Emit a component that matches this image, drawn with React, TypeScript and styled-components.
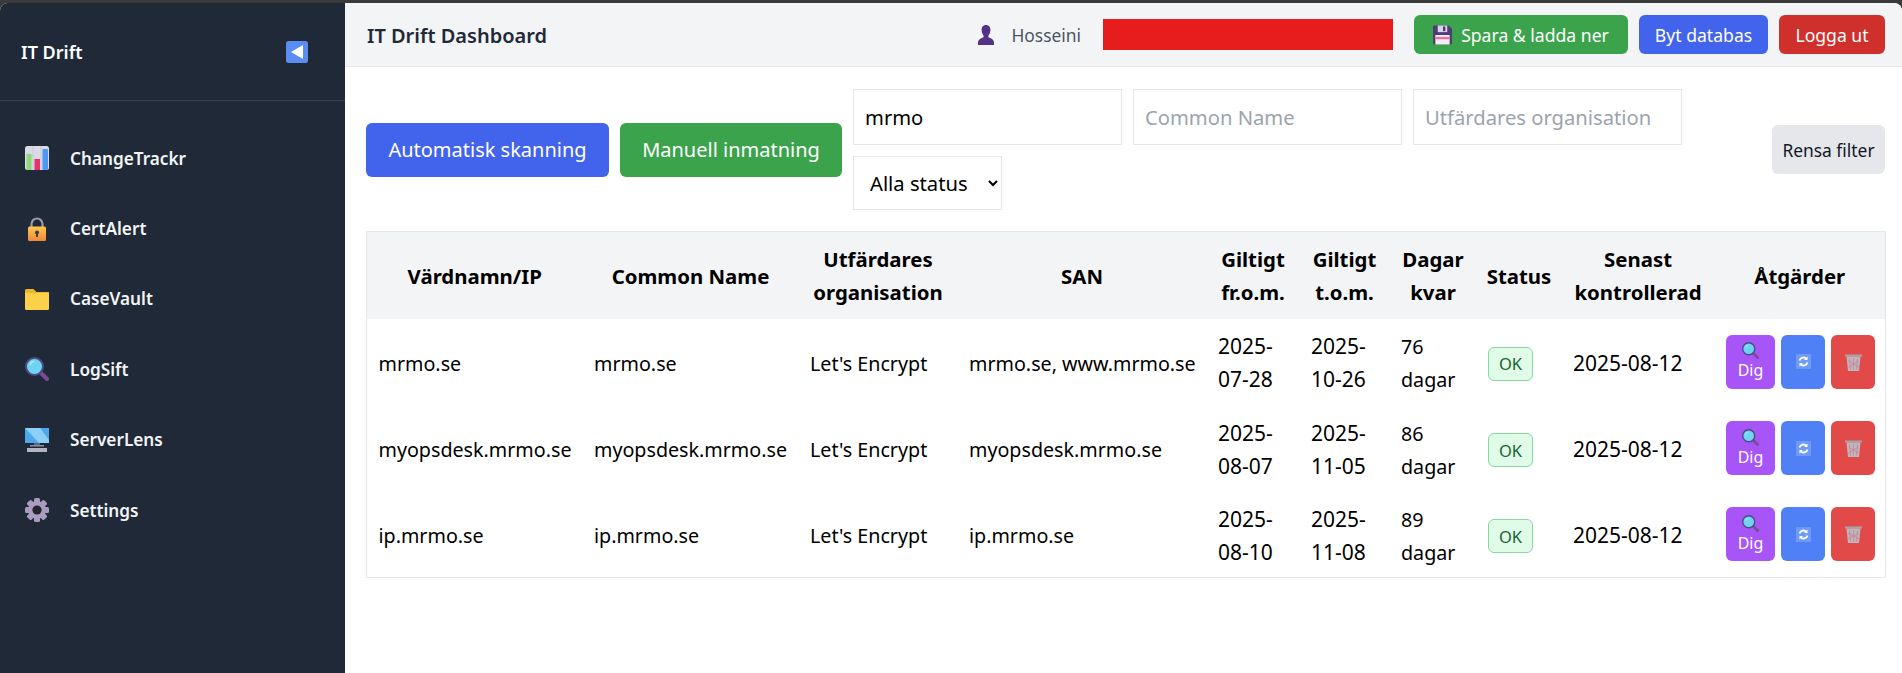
import React from "react";
import styled, { createGlobalStyle } from "styled-components";

const Global = createGlobalStyle`
  html, body { margin: 0; padding: 0; height: 100%; background: #3a3a3a; }
  #root { height: 100%; }
  * { box-sizing: border-box; }
  body { font-family: "Noto Sans", "Open Sans", sans-serif; color: #000; overflow: hidden; }
`;

const Page = styled.div`
  height: 673px;
  padding-top: 3px;
  background: #3a3a3a;
`;
const Shell = styled.div`
  display: flex;
  height: 670px;
  border-radius: 8px 8px 0 0;
  overflow: hidden;
  background: #fff;
`;
const Sidebar = styled.aside`
  width: 345px;
  flex: none;
  background: #1f2937;
  color: #fff;
`;
const Brand = styled.div`
  height: 98px;
  display: flex;
  align-items: center;
  justify-content: space-between;
  padding: 0 37px 0 21px;
  border-bottom: 1px solid #374151;
`;
const BrandName = styled.span`
  font-size: 18px;
  font-weight: 600;
`;
const Nav = styled.nav`
  display: flex;
  flex-direction: column;
  padding-top: 22px;
`;
const NavItem = styled.a`
  height: 70.4px;
  display: flex;
  align-items: center;
  gap: 21px;
  padding-left: 25px;
  font-size: 17.2px;
  font-weight: 600;
  color: #f3f4f6;
`;
const Main = styled.main`
  flex: 1;
  min-width: 0;
  display: flex;
  flex-direction: column;
`;
const Header = styled.header`
  height: 64px;
  display: flex;
  align-items: center;
  padding: 0 17px 0 22px;
  background: #f3f4f6;
  border-bottom: 1px solid #e5e7eb;
`;
const Title = styled.h1`
  margin: 0 auto 0 0;
  padding-top: 2px;
  font-size: 20px;
  font-weight: 600;
  color: #1f2937;
`;
const UserName = styled.span`
  margin-left: 15px;
  font-size: 17.4px;
  color: #4b5563;
`;
const Redaction = styled.div`
  width: 290px;
  height: 31px;
  margin: 0 21px 0 22px;
  background: #e71d1d;
`;
const TopButtons = styled.div`
  display: flex;
  gap: 11px;
`;
const TopButton = styled.button<{ $bg: string; $w: number }>`
  width: ${(p) => p.$w}px;
  height: 39px;
  padding: 0;
  display: flex;
  align-items: center;
  justify-content: center;
  gap: 9px;
  border: 0;
  border-radius: 6px;
  background: ${(p) => p.$bg};
  color: #fff;
  font: 400 17.6px "Noto Sans", sans-serif;
  white-space: nowrap;
`;
const Content = styled.div`
  padding: 22px 17px 0 21px;
`;
const Toolbar = styled.div`
  display: flex;
  align-items: center;
  margin-bottom: 21px;
`;
const BigButton = styled.button<{ $bg: string; $w: number }>`
  width: ${(p) => p.$w}px;
  height: 54px;
  padding: 0;
  margin-right: 11px;
  flex: none;
  border: 0;
  border-radius: 6px;
  background: ${(p) => p.$bg};
  color: #fff;
  font: 400 20px "Noto Sans", sans-serif;
  white-space: nowrap;
`;
const Filters = styled.div`
  width: 840px;
  display: flex;
  flex-wrap: wrap;
  gap: 11px;
`;
const FilterInput = styled.input`
  width: 269px;
  height: 56px;
  padding: 0 11px;
  border: 1px solid #e5e7eb;
  background: #fff;
  color: #000;
  font: 400 20.2px "Noto Sans", sans-serif;
  &::placeholder { color: #9ca3af; opacity: 1; }
`;
const FilterSelect = styled.select`
  width: 149px;
  height: 54px;
  padding: 0 12px;
  border: 1px solid #e5e7eb;
  background: #fff;
  color: #000;
  font: 400 20.2px "Noto Sans", sans-serif;
`;
const ClearButton = styled.button`
  width: 113px;
  height: 49px;
  margin-left: auto;
  padding: 0;
  flex: none;
  border: 0;
  border-radius: 6px;
  background: #e5e7eb;
  color: #111827;
  font: 400 17.4px "Noto Sans", sans-serif;
  white-space: nowrap;
`;
const Table = styled.table`
  width: 1519px;
  table-layout: fixed;
  border-collapse: collapse;
  border: 1px solid #e5e7eb;
  font-size: 19.7px;
  line-height: 33px;
`;
const Col = styled.col<{ $w: number }>`
  width: ${(p) => p.$w}px;
`;
const Th = styled.th`
  height: 87px;
  padding: 2px 8px 0;
  background: #f3f4f6;
  font-weight: 700;
  font-size: 20.4px;
  text-align: center;
`;
const Td = styled.td<{ $date?: boolean }>`
  height: 86.4px;
  padding: 3px 8px 0 11.5px;
  vertical-align: middle;
  font-size: ${(p) => (p.$date ? "21px" : "19.7px")};
`;
const Badge = styled.span`
  display: flex;
  align-items: center;
  justify-content: center;
  width: 45px;
  height: 34px;
  margin-top: 1px;
  border: 1px solid #86d99f;
  border-radius: 6px;
  background: #e0fbe7;
  color: #166534;
  font-size: 16.5px;
`;
const Actions = styled.div`
  display: flex;
  gap: 6px;
  margin-top: -3px;
`;
const ActionButton = styled.button<{ $bg: string; $w: number }>`
  width: ${(p) => p.$w}px;
  height: 54px;
  padding: 0;
  display: flex;
  flex-direction: column;
  align-items: center;
  justify-content: center;
  border: 0;
  border-radius: 6px;
  background: ${(p) => p.$bg};
  color: #fff;
  font: 400 16px/22px "Noto Sans", sans-serif;
`;
const Glyph = styled.svg`
  display: block;
  flex: none;
`;

const ChartIcon = () => (
  <Glyph width="24" height="24" viewBox="0 0 24 24">
    <rect width="24" height="24" rx="2.5" fill="#d9dbe6" />
    <path d="M8 0v24M16 0v24" stroke="#c6c6d6" strokeWidth="0.8" />
    <rect x="1.5" y="8" width="5" height="16" fill="#8fd878" />
    <rect x="9.5" y="13" width="5.5" height="11" fill="#e8326f" />
    <rect x="17.5" y="3" width="5.5" height="21" rx="1" fill="#4a98f0" />
  </Glyph>
);
const LockIcon = () => (
  <Glyph width="24" height="24" viewBox="0 0 24 24">
    <defs>
      <linearGradient id="lockFill" x1="0" y1="0" x2="0" y2="1">
        <stop offset="0" stopColor="#ffc94d" />
        <stop offset="1" stopColor="#f2873a" />
      </linearGradient>
    </defs>
    <path d="M6.5 11V7a5.5 5.5 0 0 1 11 0v4" fill="none" stroke="#9a9aa6" strokeWidth="2.2" />
    <rect x="3" y="9.5" width="18" height="14.5" rx="1.5" fill="url(#lockFill)" />
    <circle cx="12" cy="15.5" r="2" fill="#3d3a4a" />
    <rect x="11" y="15.5" width="2" height="4.5" fill="#3d3a4a" />
  </Glyph>
);
const FolderIcon = () => (
  <Glyph width="24" height="24" viewBox="0 0 24 24">
    <path d="M0 3.5A1.5 1.5 0 0 1 1.5 2h7l3 3H24v4H0z" fill="#f0b429" />
    <path d="M0 6h22.5A1.5 1.5 0 0 1 24 7.5v14a1.5 1.5 0 0 1-1.5 1.5h-21A1.5 1.5 0 0 1 0 21.5z" fill="#fdd04a" />
  </Glyph>
);
const SearchIcon = ({ size = 24 }: { size?: number }) => (
  <Glyph width={size} height={size} viewBox="0 0 24 24">
    <path d="M15.5 15.5 22 22" stroke="#7d4a96" strokeWidth="4" strokeLinecap="round" />
    <circle cx="9.5" cy="9.5" r="8.5" fill="#6fd3f2" stroke="#4d4a86" strokeWidth="2" />
    <path d="M5 8a5 5 0 0 1 4-3.5" fill="none" stroke="#a8e8fa" strokeWidth="1.5" />
  </Glyph>
);
const MonitorIcon = () => (
  <Glyph width="24" height="24" viewBox="0 0 24 24">
    <rect y="0" width="24" height="15" fill="#4fa8ee" />
    <path d="M0 0h15l9 12v3H14z" fill="#8cd0f7" />
    <rect x="9" y="15" width="6" height="3" fill="#5e6678" />
    <rect x="5" y="17" width="14" height="1.5" fill="#8f93a3" />
    <rect x="2" y="20" width="20" height="4" fill="#b3b4c2" />
  </Glyph>
);
const GearIcon = () => (
  <Glyph width="24" height="24" viewBox="0 0 24 24">
    <g fill="#a99cc0">
      {[0, 45, 90, 135].map((a) => (
        <rect key={a} x="9" y="0" width="6" height="24" rx="1.5" transform={`rotate(${a} 12 12)`} />
      ))}
      <circle cx="12" cy="12" r="9" />
    </g>
    <circle cx="12" cy="12" r="4.6" fill="#24242e" />
  </Glyph>
);
const BackIcon = () => (
  <Glyph width="22" height="22" viewBox="0 0 22 22">
    <rect width="22" height="22" rx="2.5" fill="#5a8df0" />
    <path d="M5 11 17 4v14z" fill="#fff" />
  </Glyph>
);
const UserIcon = () => (
  <Glyph width="20" height="20" viewBox="0 0 20 20">
    <path d="M10 0c3 0 4.6 2.4 4.4 5.2C14.2 8 13 9.6 12.4 10.8c-.3.8 0 1.4.8 1.8 2 1 4.8 2 4.8 5.6V20H2v-1.800c0-3.600 2.800-4.600 4.800-5.600.8-.4 1.100-1 .8-1.800C7 9.600 5.800 8 5.600 5.200 5.400 2.400 7 0 10 0z" fill="#553285" />
  </Glyph>
);
const SaveIcon = () => (
  <Glyph width="19" height="20" viewBox="0 0 20 20">
    <path d="M0 1.500A1.500 1.500 0 0 1 1.500 0h15L20 3.500v15a1.500 1.500 0 0 1-1.500 1.500h-17A1.500 1.500 0 0 1 0 18.500z" fill="#4d3c78" />
    <rect x="5" y="0" width="10" height="7" fill="#d8d6e4" />
    <rect x="10.500" y="1" width="2.500" height="5" fill="#4d3c78" />
    <rect x="2.500" y="10" width="15" height="10" fill="#f1eef6" />
    <rect x="2.500" y="12" width="15" height="2.500" fill="#ef6fa0" />
  </Glyph>
);
const RefreshIcon = () => (
  <Glyph width="15" height="15" viewBox="0 0 15 15">
    <rect width="15" height="15" rx="1" fill="#6f9bf7" />
    <path d="M3.500 6.500a4 4 0 0 1 7-1.500M11.500 8.500a4 4 0 0 1-7 1.500" fill="none" stroke="#fff" strokeWidth="1.800" />
    <path d="M11.500 2.500v3.500H8zM3.500 12.500V9H7z" fill="#fff" />
  </Glyph>
);
const TrashIcon = () => (
  <Glyph width="17" height="18" viewBox="0 0 17 18">
    <path d="M0 1.500h17v2H0z" fill="#a8a3a8" />
    <path d="M1.500 3.500h14L14 18H3z" fill="#bdb6ba" />
    <path d="M4.500 5.500l1 11M8.500 5.500v11M12.500 5.500l-1 11M3.500 8l10 6M13.500 8l-10 6" stroke="#cf7f96" strokeWidth="0.800" fill="none" />
  </Glyph>
);

const navItems: [React.ReactNode, string][] = [
  [<ChartIcon />, "ChangeTrackr"],
  [<LockIcon />, "CertAlert"],
  [<FolderIcon />, "CaseVault"],
  [<SearchIcon />, "LogSift"],
  [<MonitorIcon />, "ServerLens"],
  [<GearIcon />, "Settings"],
];

const columns: [number, React.ReactNode][] = [
  [216, "Värdnamn/IP"],
  [216, "Common Name"],
  [159, <>Utfärdares organisation</>],
  [249, "SAN"],
  [93, <>Giltigt fr.o.m.</>],
  [90, <>Giltigt t.o.m.</>],
  [87, <>Dagar kvar</>],
  [85, "Status"],
  [153, <>Senast kontrollerad</>],
  [171, "Åtgärder"],
];

const rows = [
  { host: "mrmo.se", san: "mrmo.se, www.mrmo.se", from: "2025-07-28", to: "2025-10-26", days: "76 dagar" },
  { host: "myopsdesk.mrmo.se", san: "myopsdesk.mrmo.se", from: "2025-08-07", to: "2025-11-05", days: "86 dagar" },
  { host: "ip.mrmo.se", san: "ip.mrmo.se", from: "2025-08-10", to: "2025-11-08", days: "89 dagar" },
];

export default function App() {
  return (
    <Page>
      <Global />
      <Shell>
        <Sidebar>
          <Brand>
            <BrandName>IT Drift</BrandName>
            <BackIcon />
          </Brand>
          <Nav>
            {navItems.map(([icon, label]) => (
              <NavItem key={label}>
                {icon}
                {label}
              </NavItem>
            ))}
          </Nav>
        </Sidebar>
        <Main>
          <Header>
            <Title>IT Drift Dashboard</Title>
            <UserIcon />
            <UserName>Hosseini</UserName>
            <Redaction />
            <TopButtons>
              <TopButton $bg="#3ba34c" $w={214}>
                <SaveIcon />
                Spara &amp; ladda ner
              </TopButton>
              <TopButton $bg="#4263eb" $w={129}>Byt databas</TopButton>
              <TopButton $bg="#d0302b" $w={106}>Logga ut</TopButton>
            </TopButtons>
          </Header>
          <Content>
            <Toolbar>
              <BigButton $bg="#4263eb" $w={243}>Automatisk skanning</BigButton>
              <BigButton $bg="#3ba34c" $w={222}>Manuell inmatning</BigButton>
              <Filters>
                <FilterInput defaultValue="mrmo" />
                <FilterInput placeholder="Common Name" />
                <FilterInput placeholder="Utfärdares organisation" />
                <FilterSelect defaultValue="all">
                  <option value="all">Alla status</option>
                </FilterSelect>
              </Filters>
              <ClearButton>Rensa filter</ClearButton>
            </Toolbar>
            <Table>
              <colgroup>
                {columns.map(([w], i) => (
                  <Col key={i} $w={w} />
                ))}
              </colgroup>
              <thead>
                <tr>
                  {columns.map(([, label], i) => (
                    <Th key={i}>{label}</Th>
                  ))}
                </tr>
              </thead>
              <tbody>
                {rows.map((r) => (
                  <tr key={r.host}>
                    <Td>{r.host}</Td>
                    <Td>{r.host}</Td>
                    <Td>Let's Encrypt</Td>
                    <Td>{r.san}</Td>
                    <Td $date>{r.from}</Td>
                    <Td $date>{r.to}</Td>
                    <Td>{r.days}</Td>
                    <Td>
                      <Badge>OK</Badge>
                    </Td>
                    <Td $date>2025-08-12</Td>
                    <Td>
                      <Actions>
                        <ActionButton $bg="#a855f7" $w={49}>
                          <SearchIcon size={17} />
                          Dig
                        </ActionButton>
                        <ActionButton $bg="#5080f6" $w={44}>
                          <RefreshIcon />
                        </ActionButton>
                        <ActionButton $bg="#e24a4a" $w={44}>
                          <TrashIcon />
                        </ActionButton>
                      </Actions>
                    </Td>
                  </tr>
                ))}
              </tbody>
            </Table>
          </Content>
        </Main>
      </Shell>
    </Page>
  );
}
